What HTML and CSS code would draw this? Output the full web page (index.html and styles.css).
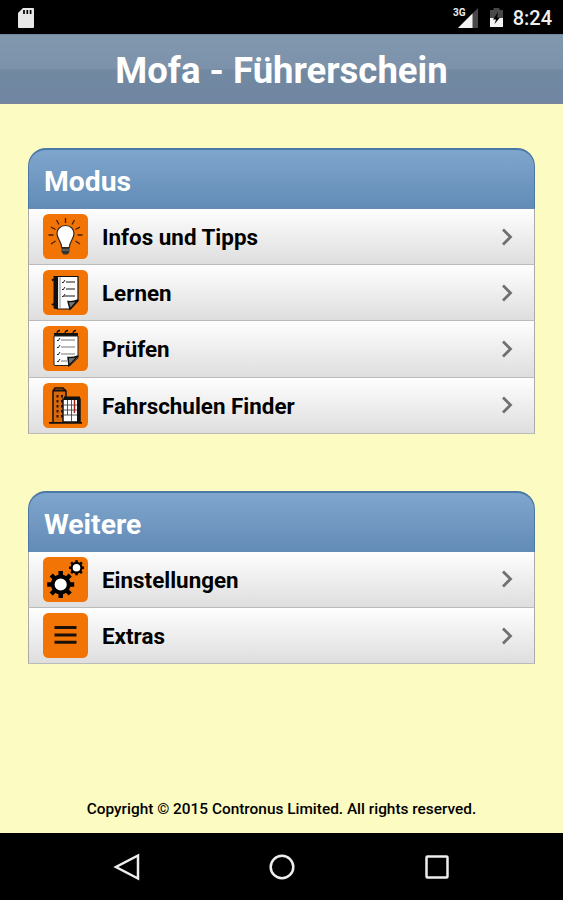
FILE: index.html
```html
<!DOCTYPE html>
<html lang="de">
<head>
<meta charset="UTF-8">
<meta name="viewport" content="width=device-width, initial-scale=1.0">
<title>Mofa - Führerschein</title>
<link rel="stylesheet" href="styles.css">
</head>
<body>

<div class="statusbar">
  <svg class="sd" width="16" height="20" viewBox="0 0 16 20">
    <path d="M5 0H15Q16 0 16 1V19Q16 20 15 20H1Q0 20 0 19V5Z" fill="#e8e8e8"/>
    <path d="M6 2v4M9.3 2v4M12.6 2v4" stroke="#000" stroke-width="1.7"/>
  </svg>
  <div class="status-right">
    <svg width="26" height="22" viewBox="0 0 26 22">
      <path d="M25 1V21H5Z" fill="#484848"/>
      <path d="M19.500 6.500V21H5Z" fill="#f2f2f2"/>
      <text class="network" x="0" y="9">3G</text>
    </svg>
    <svg class="battery" width="15" height="21" viewBox="0 0 15 21">
      <path d="M1 3H4.500V1H10.500V3H14V20H1Z" fill="#484848"/>
      <path d="M1 11H14V20H1Z" fill="#f2f2f2"/>
      <path d="M9 5L4 12.500H7L5.500 17L11 10.500H8Z" fill="#000"/>
    </svg>
    <span class="clock">8:24</span>
  </div>
</div>

<header class="titlebar"><h1>Mofa - Führerschein</h1></header>

<main>
  <section class="list">
    <h2>Modus</h2>
    <a class="row">
      <svg class="icon" viewBox="0 0 45 45">
        <rect width="45" height="45" rx="5.500"/>
        <path d="M22.500 4V9M13.500 6L16 10.500M31.500 6L29 10.500M8 13L12.500 15.500M37 13L32.500 15.500M5.500 21H10.500M34.500 21H39.500M8 30L12.500 27M37 30L32.500 27" stroke="#422000" stroke-width="1.300"/>
        <path d="M22.500 11.500C17 11.500 14 15.500 14 19.500C14 25 18.500 27 18.700 33.500H26.300C26.500 27 31 25 31 19.500C31 15.500 28 11.500 22.500 11.500Z" fill="#fff" stroke="#332719" stroke-width="1.200"/>
        <path d="M18.500 34H26.500V38L24.500 40.500H20.500L18.500 38Z" fill="#303532"/>
        <path d="M19 36H26" stroke="#7f8985"/>
      </svg>
      <span>Infos und Tipps</span>
      <svg class="chevron" viewBox="0 0 12 20"><path d="M2 2.500L9.500 10L2 17.500"/></svg>
    </a>
    <a class="row">
      <svg class="icon" viewBox="0 0 45 45">
        <rect width="45" height="45" rx="5.500"/>
        <path d="M10.500 6H15V39H12Q10.500 39 10.500 37Z" fill="#111"/>
        <path d="M9 10.500Q11 8.500 13 11M9 35Q11 33 13 36" fill="none" stroke="#111" stroke-width="1.800"/>
        <path d="M14.500 6.500H35V31L27.500 39H14.500Z" fill="#fff" stroke="#111" stroke-width="1.200"/>
        <path d="M17 7V38.500" stroke="#888"/>
        <path d="M19 12l1 1 2-3M19 19l1 1 2-3M19 26l1 1 2-3" fill="none" stroke="#222" stroke-width="1"/>
        <path d="M23 12H32M23 19H32M20 26H32" stroke="#666" stroke-width="1.300"/>
        <path d="M27 39L25 31.500Q30 32 35 30Z" fill="#777" stroke="#111" stroke-width="1.400"/>
      </svg>
      <span>Lernen</span>
      <svg class="chevron" viewBox="0 0 12 20"><path d="M2 2.500L9.500 10L2 17.500"/></svg>
    </a>
    <a class="row">
      <svg class="icon" viewBox="0 0 45 45">
        <rect width="45" height="45" rx="5.500"/>
        <path d="M11 7H35V11H11Z" fill="#111"/>
        <path d="M14 8Q14 4.500 17 4.500M22 8Q22 4.500 25 4.500M30 8Q30 4.500 33 4.500" fill="none" stroke="#111" stroke-width="1.300"/>
        <path d="M11 10H35V32L27 39.500H12Q11 39.500 11 38Z" fill="#fff" stroke="#222"/>
        <path d="M14 14l1 1 2-3M14 21l1 1 2-3M14 28l1 1 2-3M14 35l1 1 2-3" fill="none" stroke="#222" stroke-width="1"/>
        <path d="M18 14H32M18 21H32M18 28H32M18 35H24" stroke="#777" stroke-width="1.200"/>
        <path d="M26 39.500L25 31.500Q30 32 35 30Z" fill="#777" stroke="#111" stroke-width="1.500"/>
      </svg>
      <span>Prüfen</span>
      <svg class="chevron" viewBox="0 0 12 20"><path d="M2 2.500L9.500 10L2 17.500"/></svg>
    </a>
    <a class="row">
      <svg class="icon" viewBox="0 0 45 45">
        <rect width="45" height="45" rx="5.500"/>
        <path d="M10 39V8L12 5H20L23 8V39" fill="#d86809" stroke="#111" stroke-width="1.500"/>
        <path d="M10 7.500H23" stroke="#111" stroke-width="2"/>
        <path d="M14.500 12V36M19 12V36" stroke="#291500" stroke-width="2" stroke-dasharray="2.500 2.500"/>
        <path d="M20 16H37V39H20Z" fill="#fff" stroke="#111" stroke-width="1.500"/>
        <path d="M21 13.500H37V17H21Z" fill="#111"/>
        <path d="M20 22H36M20 27H36M20 32H36M24.500 17V32M28.500 17V39" stroke="#444" stroke-width=".9"/>
        <path d="M31.500 17V30" stroke="#a5251b" stroke-width="1.500"/>
        <path d="M35.500 16V39" stroke="#111" stroke-width="3"/>
        <path d="M6 39.800H39" stroke="#111" stroke-width="1.800"/>
      </svg>
      <span>Fahrschulen Finder</span>
      <svg class="chevron" viewBox="0 0 12 20"><path d="M2 2.500L9.500 10L2 17.500"/></svg>
    </a>
  </section>

  <section class="list">
    <h2>Weitere</h2>
    <a class="row">
      <svg class="icon" viewBox="0 0 45 45">
        <rect width="45" height="45" rx="5.500"/>
        <circle cx="17.700" cy="27.500" r="8" fill="#fff" stroke="#000" stroke-width="3.800"/>
        <g stroke="#000" stroke-width="4.500">
          <path d="M17.700 14V19M17.700 36V41M4.200 27.500H9.200M26.200 27.500H31.200"/>
          <path d="M8.200 18L11.700 21.500M23.700 33.500L27.200 37M27.200 18L23.700 21.500M11.700 33.500L8.200 37"/>
        </g>
        <circle cx="33.500" cy="10.800" r="4.900" fill="#fff" stroke="#000" stroke-width="2.200"/>
        <g stroke="#000" stroke-width="2.500">
          <path d="M33.500 3.300V6.100M33.500 15.500V18.300M26 10.800H28.800M38.200 10.800H41"/>
          <path d="M28.100 5.400L30 7.300M37 14.300L38.900 16.200M38.900 5.400L37 7.300M30 14.300L28.100 16.200"/>
        </g>
      </svg>
      <span>Einstellungen</span>
      <svg class="chevron" viewBox="0 0 12 20"><path d="M2 2.500L9.500 10L2 17.500"/></svg>
    </a>
    <a class="row">
      <svg class="icon" viewBox="0 0 45 45">
        <rect width="45" height="45" rx="5.500"/>
        <path d="M11.500 14.500H33.500M11.500 22H33.500M11.500 29.300H33.500" stroke="#1b1008" stroke-width="3"/>
      </svg>
      <span>Extras</span>
      <svg class="chevron" viewBox="0 0 12 20"><path d="M2 2.500L9.500 10L2 17.500"/></svg>
    </a>
  </section>

  <footer>Copyright © 2015 Contronus Limited. All rights reserved.</footer>
</main>

<nav class="navbar">
  <svg viewBox="0 0 28 28"><path d="M25 2.500V25.500L3 14Z"/></svg>
  <svg viewBox="0 0 28 28"><circle cx="14" cy="14" r="11.300"/></svg>
  <svg viewBox="0 0 28 28"><rect x="3.500" y="3.500" width="21" height="21" rx="1"/></svg>
</nav>

</body>
</html>
```

FILE: styles.css
```css
* {
  box-sizing: border-box;
}
body {
  margin: 0;
  height: 900px;
  display: flex;
  flex-direction: column;
  font-family: Roboto, sans-serif;
  background-color: #fcfbc1;
  color: #000;
}
.statusbar {
  height: 34px;
  padding: 1px 11px 0 18px;
  display: flex;
  justify-content: space-between;
  align-items: center;
  background-color: #000;
  color: #f0f0f0;
}
.status-right {
  display: flex;
  align-items: center;
}
.network {
  font-size: 10px;
  font-weight: bold;
  fill: #eee;
}
.battery {
  margin: 0 9px 0 10px;
}
.clock {
  font-size: 20px;
  font-weight: 500;
}
.titlebar {
  height: 70px;
  background: linear-gradient(#8298af, #7c92aa 50%, #7289a2 51%, #7086a1);
  border-top: 1px solid #70869d;
  border-bottom: 1px solid #7d849c;
}
h1 {
  margin: 0;
  color: #fff;
  font-size: 36.5px;
  line-height: 72px;
  font-weight: bold;
  text-align: center;
}
main {
  flex: 1;
  display: flex;
  flex-direction: column;
  padding: 44px 28px 0;
}
.list {
  margin-bottom: 57px;
}
h2 {
  height: 61px;
  margin: 0;
  padding: 0 15px;
  border: 1px solid #4c78a7;
  border-top-width: 2px;
  border-bottom-color: #6689b5;
  border-radius: 18px 18px 0 0;
  background: linear-gradient(#7fa6cd, #628bb6);
  color: #fff;
  font-size: 28.3px;
  line-height: 64px;
}
.row {
  display: flex;
  align-items: center;
  height: 56.2px;
  padding: 0 21px 0 14px;
  border: 1px solid #aaa;
  border-top: 0;
  border-bottom-color: #bbb;
  background: linear-gradient(#fefefe, #dedede);
  font-size: 22.4px;
  font-weight: bold;
}
.row span {
  flex: 1;
  margin-left: 14px;
  padding-top: 1px;
}
.icon {
  width: 45px;
  height: 45px;
}
.icon rect {
  fill: #f27405;
}
.chevron {
  width: 12px;
  height: 20px;
  fill: none;
  stroke: #707070;
  stroke-width: 2.8;
}
footer {
  margin-top: auto;
  padding-bottom: 15px;
  font-size: 15.4px;
  line-height: 18px;
  font-weight: 500;
  text-align: center;
}
.navbar {
  height: 67px;
  display: flex;
  justify-content: center;
  align-items: center;
  gap: 127px;
  background-color: #000;
}
.navbar svg {
  width: 28px;
  height: 28px;
  fill: none;
  stroke: #eee;
  stroke-width: 2.5;
}
```
